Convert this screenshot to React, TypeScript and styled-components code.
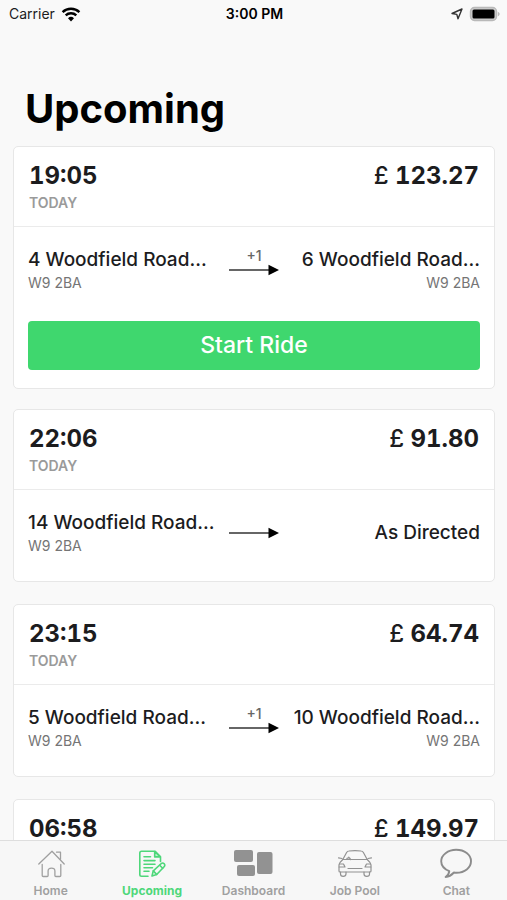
import React from "react";
import styled, { createGlobalStyle } from "styled-components";

const GlobalStyle = createGlobalStyle`
  *, *::before, *::after { box-sizing: border-box; }
  body {
    margin: 0;
    background: #f9f9f9;
    color: #1c1c1e;
    font-family: Inter, "Liberation Sans", sans-serif;
  }
`;

const Screen = styled.div`
  display: flex;
  flex-direction: column;
  height: 100vh;
  overflow: hidden;
`;

const StatusBar = styled.header`
  display: grid;
  grid-template-columns: 1fr auto 1fr;
  align-items: center;
  flex: none;
  padding: 4px 7px 0 9px;
  font-size: 14px;
  line-height: 20px;
`;

const StatusGroup = styled.div<{ $end?: boolean }>`
  display: flex;
  align-items: center;
  justify-content: ${(p) => (p.$end ? "flex-end" : "flex-start")};
  gap: 6px;

  svg { display: block; }
`;

const Clock = styled.time`
  font-weight: 600;
  color: #000;
`;

const Content = styled.main`
  flex: 1;
  min-height: 0;
  overflow-y: auto;
  scrollbar-width: none;
  padding: 60px 12px 0 13px;
`;

const Title = styled.h1`
  margin: 0 0 12px 12px;
  font-size: 40px;
  line-height: 50px;
  font-weight: 700;
  color: #000;
`;

const Card = styled.article<{ $featured: boolean }>`
  margin-bottom: ${(p) => (p.$featured ? 20 : 22)}px;
  border: 1px solid #e7e7e7;
  border-radius: 5px;
  background: #fff;
`;

const CardHeader = styled.div`
  display: flex;
  justify-content: space-between;
  padding: 15px 15px 13px;
  border-bottom: 1px solid #ebebeb;
`;

const Headline = styled.div`
  font-size: 24px;
  line-height: 28px;
  font-weight: 700;
  font-variant-numeric: tabular-nums;
`;

const Currency = styled.span`
  font-weight: 500;
`;

const Day = styled.div`
  margin-top: 3px;
  font-size: 14px;
  line-height: 20px;
  font-weight: 600;
  color: #9a9a9a;
`;

const CardBody = styled.div<{ $featured: boolean }>`
  padding: ${(p) => (p.$featured ? "20px 14px 18px" : "20px 14px 25px")};
`;

const Route = styled.div`
  display: grid;
  grid-template-columns: 1fr 50px 1fr;
  align-items: center;
`;

const Stop = styled.div<{ $end?: boolean }>`
  text-align: ${(p) => (p.$end ? "right" : "left")};
  white-space: nowrap;
`;

const Address = styled.div`
  font-size: 19px;
  line-height: 26px;
  font-weight: 500;
`;

const Postcode = styled.div`
  font-size: 14px;
  line-height: 20px;
  color: #757575;
`;

const Leg = styled.div`
  position: relative;

  svg { display: block; width: 100%; }
`;

const Extra = styled.span`
  position: absolute;
  left: 0;
  right: 0;
  bottom: 12px;
  text-align: center;
  font-size: 14px;
  line-height: 16px;
  font-weight: 500;
  color: #666;
`;

const StartButton = styled.button`
  display: block;
  width: 100%;
  margin-top: 28px;
  padding: 10px;
  border: 0;
  border-radius: 4px;
  background: #3fd76e;
  color: #fff;
  font: 500 23px/29px Inter, "Liberation Sans", sans-serif;
  cursor: pointer;
`;

const TabBar = styled.nav`
  display: grid;
  grid-template-columns: repeat(5, 1fr);
  flex: none;
  border-top: 1px solid #dedede;
  background: #f7f7f7;
`;

const Tab = styled.a<{ $active: boolean }>`
  display: flex;
  flex-direction: column;
  align-items: center;
  padding: 7px 0 1px;
  font-size: 12px;
  line-height: 16px;
  font-weight: ${(p) => (p.$active ? 700 : 600)};
  color: ${(p) => (p.$active ? "#4ed77a" : "#a0a0a0")};
  text-decoration: none;

  svg { display: block; margin-bottom: 5px; }
`;

const WifiIcon = () => (
  <svg width="20" height="15" viewBox="0 0 20 15" fill="none" stroke="#000" strokeWidth="2.4" aria-hidden="true">
    <path d="M1.6 5.2a12 12 0 0 1 16.8 0" />
    <path d="M4.7 8.4a7.6 7.6 0 0 1 10.6 0" />
    <path d="M10 14.4 7 11.3a4.3 4.3 0 0 1 6 0z" fill="#000" stroke="none" />
  </svg>
);

const LocationIcon = () => (
  <svg width="12" height="12" viewBox="0 0 12 12" fill="none" stroke="#333" strokeWidth="1.4" strokeLinejoin="round" aria-hidden="true">
    <path d="M11 1 7 10.800 5.800 6.400 1 5.500z" />
  </svg>
);

const BatteryIcon = () => (
  <svg width="31" height="16" viewBox="0 0 31 16" aria-hidden="true">
    <rect x="1.500" y="1.500" width="26" height="13" rx="4" fill="#ccc" stroke="#b9b9b9" strokeWidth="1.4" />
    <rect x="3.500" y="3.500" width="22" height="9" rx="1.5" fill="#000" />
    <path d="M28.800 5.700c2.400 .8 2.400 3.800 0 4.600z" fill="#b9b9b9" />
  </svg>
);

const ArrowIcon = () => (
  <svg height="12" viewBox="0 0 50 12" aria-hidden="true">
    <path d="M0 6h40" stroke="#333" strokeWidth="1.5" />
    <path d="M39.500 .8 50 6 39.500 11.200z" fill="#000" />
  </svg>
);

const HomeIcon = () => (
  <svg width="28" height="30" viewBox="0 0 28 30" fill="none" stroke="currentColor" strokeWidth="1.300" strokeLinecap="round" strokeLinejoin="round" aria-hidden="true">
    <path d="M1.800 16 15 3.200 27.200 16" />
    <path d="M19.500 4.200h4v7" />
    <path d="M5.200 16.500v11q0 1 1 1h4q.9 0 .9-1v-4.400q0-3 3.400-3t3.400 3v4.400q0 1 .9 1h4q1 0 1-1v-11" />
  </svg>
);

const UpcomingIcon = () => (
  <svg width="28" height="30" viewBox="0 0 28 30" fill="none" stroke="currentColor" strokeWidth="1.600" strokeLinecap="round" strokeLinejoin="round" aria-hidden="true">
    <path d="M10 28.200H3.500q-1.700 0-1.700-1.700V5q0-1.700 1.700-1.700h13.700l5.300 5.400v4.800" />
    <path d="M16.700 3.500v5.400h5.600z" fill="currentColor" fillOpacity=".3" />
    <path d="M6 8.800h6.500M6 12.600h11M6 16.200h11M6 19.800h8.500M6 23.200h5" />
    <path d="m14 28 1.300-5.200 8-7.300q1.500-1.100 2.900.3 1.200 1.500-.1 2.900L18.700 26.500z" />
    <path d="m21.700 17.200 3 3.100M15.300 22.900l3.300 3.500" />
  </svg>
);

const DashboardIcon = () => (
  <svg width="40" height="30" viewBox="0 0 40 30" fill="#929292" aria-hidden="true">
    <rect x="1" y="2" width="19" height="12" rx="2" />
    <rect x="4" y="17" width="18" height="11" rx="2" />
    <rect x="24" y="4" width="15.500" height="22" rx="2" />
  </svg>
);

const CarIcon = () => (
  <svg width="36" height="30" viewBox="0 0 36 30" fill="none" stroke="#929292" strokeWidth="1.200" strokeLinecap="round" strokeLinejoin="round" aria-hidden="true">
    <path d="M5.800 11.500 9.600 4.500Q10.400 3.100 12 3q6-.7 12 0 1.600.1 2.400 1.500l3.800 7" />
    <path d="M5.800 11.500h24.400M1.500 9.800l3.500.7M34.500 9.800l-3.500.7" />
    <path d="M9.500 11.500q.3-1.700 2-1.700t2 1.700M13.700 11.500l-2-2.400" />
    <path d="M5.800 11.500Q2.300 14.500 2 17v6q0 1 1 1h30q1 0 1-1v-6q-.3-2.500-3.800-5.500" />
    <path d="M2.300 16H6.500l1.500 3H2.200M33.700 16H29.500l-1.500 3h5.800M11 20.500h14" />
    <path d="M3.500 24v2q0 2.300 2.700 2.300T9 26v-2M27 24v2q0 2.300 2.800 2.300t2.700-2.300v-2" />
  </svg>
);

const ChatIcon = () => (
  <svg width="32" height="30" viewBox="0 0 32 30" fill="none" stroke="#8c8c8c" strokeWidth="1.900" strokeLinejoin="round" aria-hidden="true">
    <path d="M9.300 23.200Q8.800 27 5.600 29q4.500-.4 8.400-4.500 1 .2 2.400.2c8.200 0 14.600-5 14.600-11.500S24.500 1.800 16.200 1.800 1.200 6.900 1.200 13.200c0 4.300 3 7.800 8.100 10z" />
  </svg>
);

type Place = { address: string; postcode?: string };
type Ride = {
  time: string;
  price: string;
  route?: { from: Place; to: Place; extra?: string };
  canStart?: boolean;
};

const rides: Ride[] = [
  {
    time: "19:05",
    price: "123.27",
    route: {
      from: { address: "4 Woodfield Road...", postcode: "W9 2BA" },
      to: { address: "6 Woodfield Road...", postcode: "W9 2BA" },
      extra: "+1",
    },
    canStart: true,
  },
  {
    time: "22:06",
    price: "91.80",
    route: {
      from: { address: "14 Woodfield Road...", postcode: "W9 2BA" },
      to: { address: "As Directed" },
    },
  },
  {
    time: "23:15",
    price: "64.74",
    route: {
      from: { address: "5 Woodfield Road...", postcode: "W9 2BA" },
      to: { address: "10 Woodfield Road...", postcode: "W9 2BA" },
      extra: "+1",
    },
  },
  { time: "06:58", price: "149.97" },
];

const tabs = [
  { label: "Home", Icon: HomeIcon },
  { label: "Upcoming", Icon: UpcomingIcon },
  { label: "Dashboard", Icon: DashboardIcon },
  { label: "Job Pool", Icon: CarIcon },
  { label: "Chat", Icon: ChatIcon },
];

function RideStop({ place, end }: { place: Place; end?: boolean }) {
  return (
    <Stop $end={end}>
      <Address>{place.address}</Address>
      {place.postcode && <Postcode>{place.postcode}</Postcode>}
    </Stop>
  );
}

function RideCard({ ride }: { ride: Ride }) {
  const featured = Boolean(ride.canStart);
  return (
    <Card $featured={featured}>
      <CardHeader>
        <div>
          <Headline>{ride.time}</Headline>
          {ride.route && <Day>TODAY</Day>}
        </div>
        <Headline>
          <Currency>£</Currency> {ride.price}
        </Headline>
      </CardHeader>
      {ride.route && (
        <CardBody $featured={featured}>
          <Route>
            <RideStop place={ride.route.from} />
            <Leg>
              {ride.route.extra && <Extra>{ride.route.extra}</Extra>}
              <ArrowIcon />
            </Leg>
            <RideStop place={ride.route.to} end />
          </Route>
          {featured && <StartButton type="button">Start Ride</StartButton>}
        </CardBody>
      )}
    </Card>
  );
}

export default function App() {
  return (
    <Screen>
      <GlobalStyle />
      <StatusBar>
        <StatusGroup>
          <span>Carrier</span>
          <WifiIcon />
        </StatusGroup>
        <Clock>3:00 PM</Clock>
        <StatusGroup $end>
          <LocationIcon />
          <BatteryIcon />
        </StatusGroup>
      </StatusBar>
      <Content>
        <Title>Upcoming</Title>
        {rides.map((ride) => (
          <RideCard key={ride.time} ride={ride} />
        ))}
      </Content>
      <TabBar>
        {tabs.map(({ label, Icon }) => {
          const active = label === "Upcoming";
          return (
            <Tab key={label} href={`#${label}`} $active={active} aria-current={active ? "page" : undefined}>
              <Icon />
              {label}
            </Tab>
          );
        })}
      </TabBar>
    </Screen>
  );
}
